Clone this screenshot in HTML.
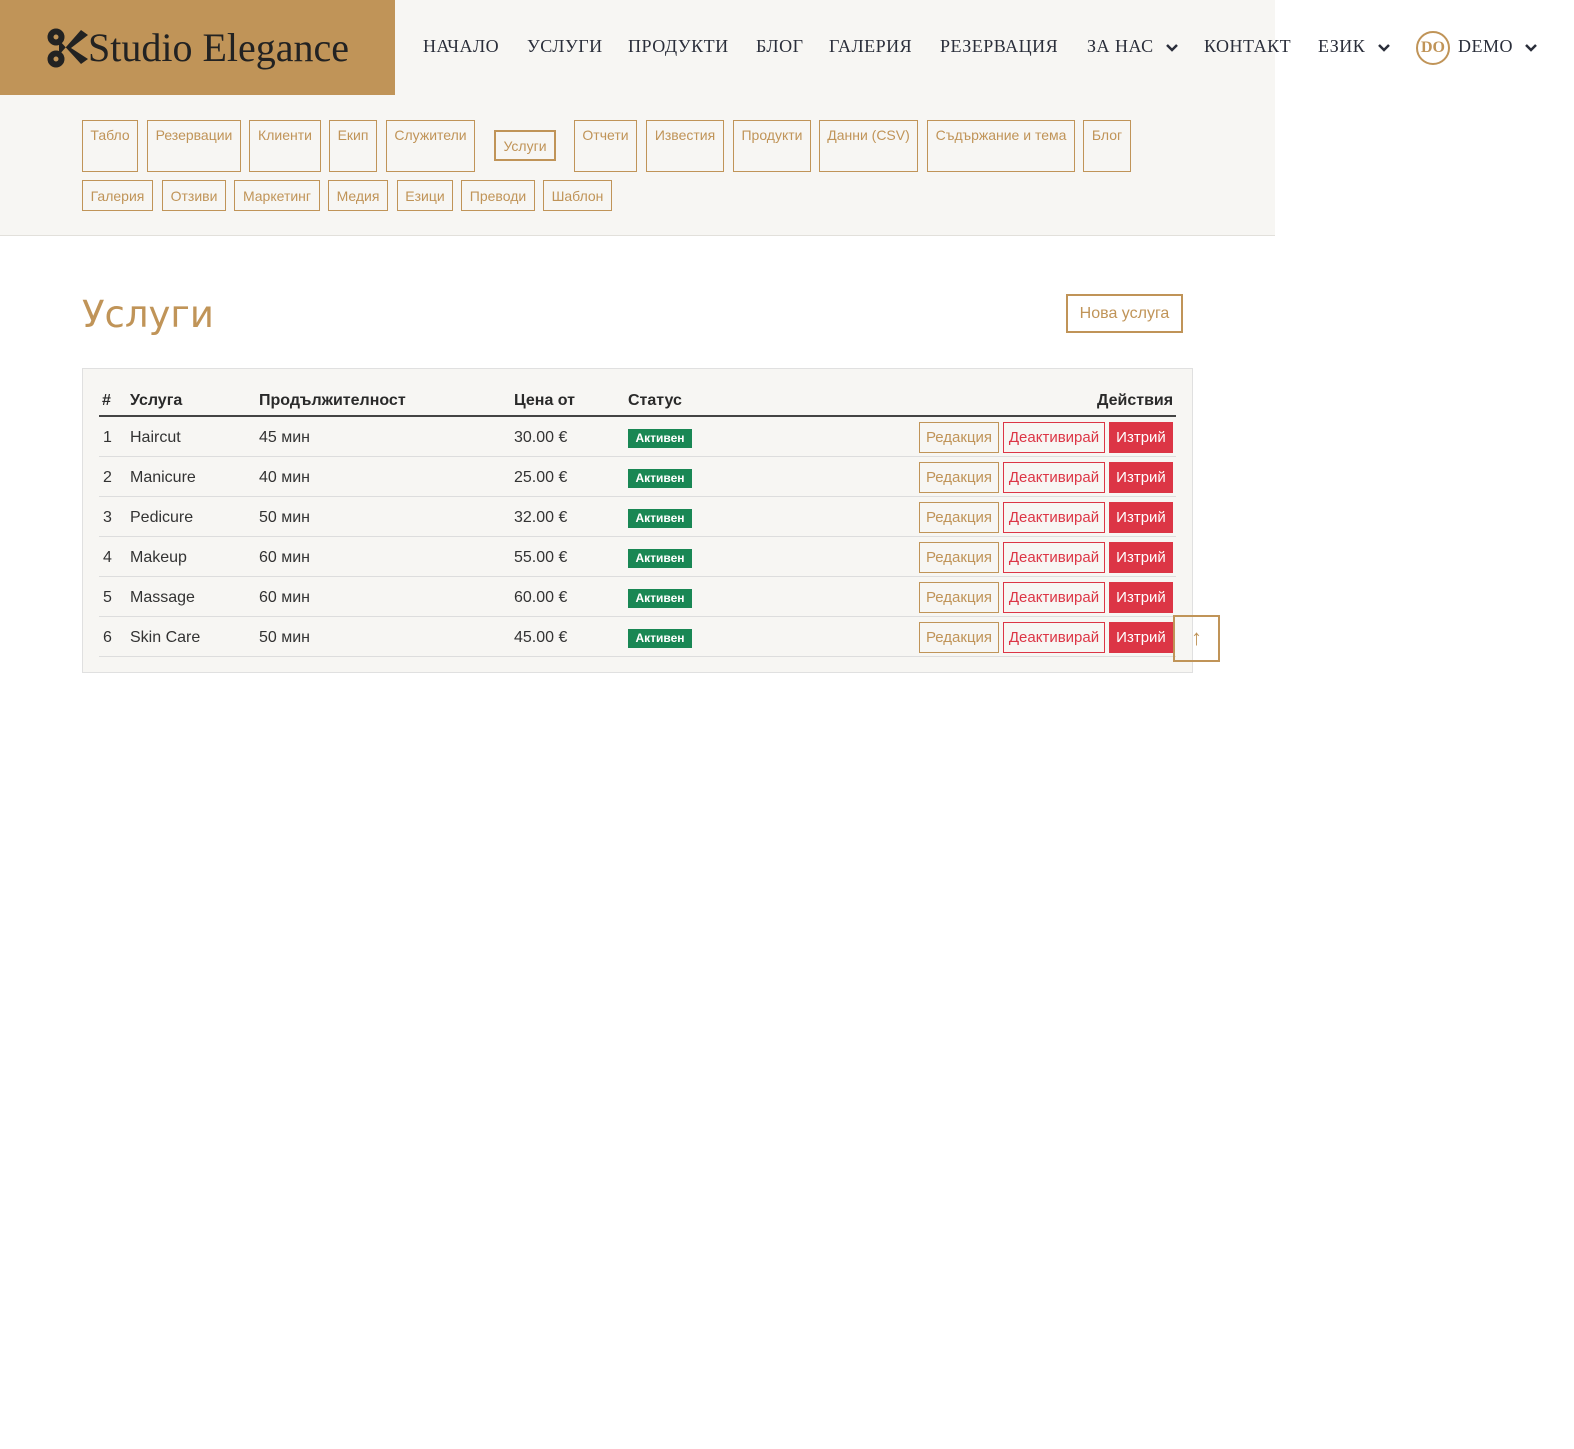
<!DOCTYPE html>
<html><head><meta charset="utf-8"><style>
*{box-sizing:border-box;margin:0;padding:0}
body{width:1574px;height:1449px;background:#fff;font-family:"Liberation Sans",sans-serif;position:relative;overflow:hidden}
.hdr{position:absolute;left:0;top:0;width:1275px;height:236px;background:#f7f6f3;border-bottom:1px solid #e2e0db}
.logo{position:absolute;left:0;top:0;width:395px;height:95px;background:#c09458}
.logo span{position:absolute;left:88px;top:24px;font-family:"Liberation Serif",serif;font-size:40px;color:#222;white-space:nowrap}
.nv{position:absolute;top:36px;font-family:"Liberation Serif",serif;font-size:18px;color:#2a2e3a;letter-spacing:.5px;white-space:nowrap}
.chev{position:absolute;top:43px}
.a{position:absolute;border:1px solid #c09458;color:#c09458;font-size:14px;padding:6px 0 0;text-align:center;background:transparent}
.r1{top:120px;height:52px}
.r2{top:180px;height:31px;padding-top:7px}
h1{position:absolute;left:82px;top:293px;font-family:"DejaVu Sans",sans-serif;font-weight:normal;font-size:37px;color:#c09458;letter-spacing:0}
.new{position:absolute;left:1066px;top:294px;width:117px;height:39px;border:2px solid #c09458;color:#c09458;font-size:16px;text-align:center;line-height:35px}
.card{position:absolute;left:82px;top:368px;width:1111px;height:305px;background:#f7f6f3;border:1px solid #e0e0e0}
.th{position:absolute;top:392px;font-weight:bold;font-size:16px;color:#2a2a2a}
.hl{position:absolute;left:99px;top:415px;width:1077px;height:2px;background:#444}
.row{position:absolute;left:99px;width:1077px;height:40px;border-bottom:1px solid #ddd}
.c{position:absolute;top:12px;font-size:16px;color:#333}
.bd{position:absolute;left:529px;top:12px;width:64px;height:19px;background:#198754;color:#fff;font-size:12px;font-weight:bold;text-align:center;line-height:19px}
.b{position:absolute;top:5px;height:31px;font-size:15px;text-align:center;line-height:29px}
.e{left:820px;width:80px;border:1px solid #c09458;color:#c09458}
.d{left:904px;width:102px;border:1px solid #dc3545;color:#dc3545}
.x{left:1010px;width:64px;background:#dc3545;color:#fff;border:1px solid #dc3545}
.top{position:absolute;left:1173px;top:615px;width:47px;height:47px;border:2px solid #c09458;color:#c09458;text-align:center;font-size:22px;line-height:42px}
</style></head><body>
<div class="hdr"></div>
<div class="logo">
<svg style="position:absolute;left:47px;top:28px" width="42" height="40" viewBox="0 0 42 40"><g fill="none" stroke="#222" stroke-width="6"><circle cx="9" cy="9" r="5.5"/><circle cx="9" cy="31" r="5.5"/></g><path d="M12 12 L34 36 L41 31 L24 20 L41 7 L34 2 L12 27 Z" fill="#222"/></svg>
<span>Studio Elegance</span></div>
<div class="nv" style="left:423px">НАЧАЛО</div>
<div class="nv" style="left:527px">УСЛУГИ</div>
<div class="nv" style="left:628px">ПРОДУКТИ</div>
<div class="nv" style="left:756px">БЛОГ</div>
<div class="nv" style="left:829px">ГАЛЕРИЯ</div>
<div class="nv" style="left:940px">РЕЗЕРВАЦИЯ</div>
<div class="nv" style="left:1087px">ЗА НАС</div>
<svg class="chev" style="left:1165px" width="14" height="10"><path d="M2 2 L7 7 L12 2" fill="none" stroke="#2a2e3a" stroke-width="2.5"/></svg>
<div class="nv" style="left:1204px">КОНТАКТ</div>
<div class="nv" style="left:1318px">ЕЗИК</div>
<svg class="chev" style="left:1377px" width="14" height="10"><path d="M2 2 L7 7 L12 2" fill="none" stroke="#2a2e3a" stroke-width="2.5"/></svg>
<div style="position:absolute;left:1416px;top:31px;width:34px;height:34px;border:2px solid #c09458;border-radius:50%;color:#c09458;font-family:'Liberation Serif',serif;font-weight:bold;font-size:16px;text-align:center;line-height:30px">DO</div>
<div class="nv" style="left:1458px">DEMO</div>
<svg class="chev" style="left:1524px" width="14" height="10"><path d="M2 2 L7 7 L12 2" fill="none" stroke="#2a2e3a" stroke-width="2.5"/></svg>

<div class="a r1" style="left:82px;width:56px">Табло</div>
<div class="a r1" style="left:147px;width:94px">Резервации</div>
<div class="a r1" style="left:249px;width:72px">Клиенти</div>
<div class="a r1" style="left:329px;width:48px">Екип</div>
<div class="a r1" style="left:386px;width:89px">Служители</div>
<div class="a" style="left:494px;top:130px;width:62px;height:31px;border-width:2px;padding-top:6px">Услуги</div>
<div class="a r1" style="left:574px;width:63px">Отчети</div>
<div class="a r1" style="left:646px;width:78px">Известия</div>
<div class="a r1" style="left:733px;width:78px">Продукти</div>
<div class="a r1" style="left:819px;width:99px">Данни (CSV)</div>
<div class="a r1" style="left:927px;width:148px">Съдържание и тема</div>
<div class="a r1" style="left:1083px;width:48px">Блог</div>
<div class="a r2" style="left:82px;width:71px">Галерия</div>
<div class="a r2" style="left:162px;width:64px">Отзиви</div>
<div class="a r2" style="left:234px;width:86px">Маркетинг</div>
<div class="a r2" style="left:328px;width:60px">Медия</div>
<div class="a r2" style="left:397px;width:56px">Езици</div>
<div class="a r2" style="left:461px;width:74px">Преводи</div>
<div class="a r2" style="left:543px;width:69px">Шаблон</div>

<h1>Услуги</h1>
<div class="new">Нова услуга</div>
<div class="card"></div>
<div class="th" style="left:102px">#</div>
<div class="th" style="left:130px">Услуга</div>
<div class="th" style="left:259px">Продължителност</div>
<div class="th" style="left:514px">Цена от</div>
<div class="th" style="left:628px">Статус</div>
<div class="th" style="left:1097px">Действия</div>
<div class="hl"></div>

<div class="row" style="top:417px"><div class="c" style="left:4px">1</div><div class="c" style="left:31px">Haircut</div><div class="c" style="left:160px">45 мин</div><div class="c" style="left:415px">30.00 €</div><div class="bd">Активен</div><div class="b e">Редакция</div><div class="b d">Деактивирай</div><div class="b x">Изтрий</div></div>
<div class="row" style="top:457px"><div class="c" style="left:4px">2</div><div class="c" style="left:31px">Manicure</div><div class="c" style="left:160px">40 мин</div><div class="c" style="left:415px">25.00 €</div><div class="bd">Активен</div><div class="b e">Редакция</div><div class="b d">Деактивирай</div><div class="b x">Изтрий</div></div>
<div class="row" style="top:497px"><div class="c" style="left:4px">3</div><div class="c" style="left:31px">Pedicure</div><div class="c" style="left:160px">50 мин</div><div class="c" style="left:415px">32.00 €</div><div class="bd">Активен</div><div class="b e">Редакция</div><div class="b d">Деактивирай</div><div class="b x">Изтрий</div></div>
<div class="row" style="top:537px"><div class="c" style="left:4px">4</div><div class="c" style="left:31px">Makeup</div><div class="c" style="left:160px">60 мин</div><div class="c" style="left:415px">55.00 €</div><div class="bd">Активен</div><div class="b e">Редакция</div><div class="b d">Деактивирай</div><div class="b x">Изтрий</div></div>
<div class="row" style="top:577px"><div class="c" style="left:4px">5</div><div class="c" style="left:31px">Massage</div><div class="c" style="left:160px">60 мин</div><div class="c" style="left:415px">60.00 €</div><div class="bd">Активен</div><div class="b e">Редакция</div><div class="b d">Деактивирай</div><div class="b x">Изтрий</div></div>
<div class="row" style="top:617px"><div class="c" style="left:4px">6</div><div class="c" style="left:31px">Skin Care</div><div class="c" style="left:160px">50 мин</div><div class="c" style="left:415px">45.00 €</div><div class="bd">Активен</div><div class="b e">Редакция</div><div class="b d">Деактивирай</div><div class="b x">Изтрий</div></div>
<div class="top">↑</div>
</body></html>
